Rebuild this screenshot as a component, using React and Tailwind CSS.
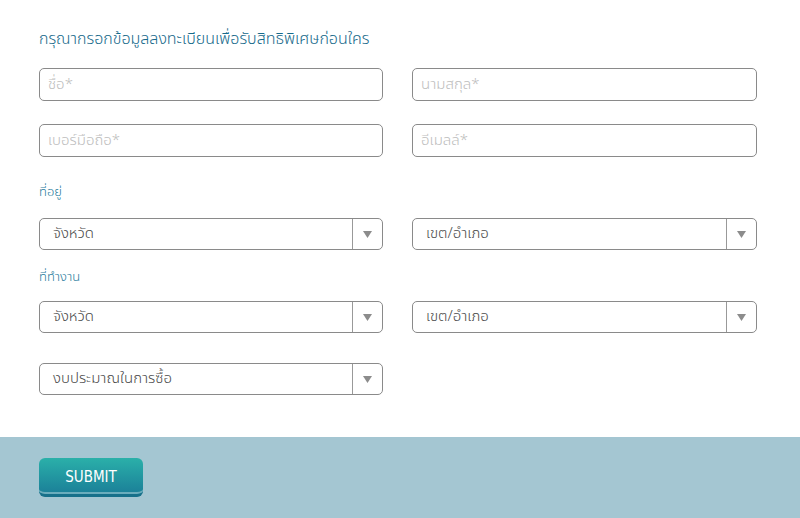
import React from 'react';

const font = { fontFamily: '"Noto Sans Thai", "Noto Sans", "Liberation Sans", sans-serif' };

const TextField = ({ placeholder }) => (
  <input
    type="text"
    placeholder={placeholder}
    className="block h-[33px] w-full rounded-[5px] border border-[#8a8a8a] bg-white px-[8px] text-[15px] font-light text-[#555] outline-none placeholder:text-[#bdbdbd]"
  />
);

const SelectField = ({ label }) => (
  <div className="flex h-[32px] w-full overflow-hidden rounded-[5px] border border-[#8a8a8a] bg-white">
    <div className="flex flex-1 items-center pl-[13px] text-[15px] font-light text-[#4a4a4a]">{label}</div>
    <div className="flex w-[30px] items-center justify-center border-l border-[#999]">
      <svg width="9" height="7" viewBox="0 0 9 7">
        <path d="M0 0h9L4.5 7z" fill="#8c8c8c" />
      </svg>
    </div>
  </div>
);

const App = () => {
  return (
    <div className="w-[800px] h-[518px] bg-white flex flex-col" style={font}>
      <div className="flex-1 pl-[39px] pr-[43px] pt-[28px]">
        <h2 className="text-[16px] font-[350] leading-[22px] text-[#176a8b]">
          กรุณากรอกข้อมูลลงทะเบียนเพื่อรับสิทธิพิเศษก่อนใคร
        </h2>

        <div className="mt-[18px] grid grid-cols-[344px_345px] gap-x-[29px] gap-y-[23px]">
          <TextField placeholder="ชื่อ*" />
          <TextField placeholder="นามสกุล*" />
          <TextField placeholder="เบอร์มือถือ*" />
          <TextField placeholder="อีเมลล์*" />
        </div>

        <div className="mt-[26px] text-[13px] font-light leading-[18px] text-[#1f7b9c]">ที่อยู่</div>
        <div className="mt-[17px] grid grid-cols-[344px_345px] gap-x-[29px]">
          <SelectField label="จังหวัด" />
          <SelectField label="เขต/อำเภอ" />
        </div>

        <div className="mt-[18px] text-[13px] font-light leading-[18px] text-[#1f7b9c]">ที่ทำงาน</div>
        <div className="mt-[15px] grid grid-cols-[344px_345px] gap-x-[29px]">
          <SelectField label="จังหวัด" />
          <SelectField label="เขต/อำเภอ" />
        </div>

        <div className="mt-[30px] grid grid-cols-[344px_345px] gap-x-[29px]">
          <SelectField label="งบประมาณในการซื้อ" />
        </div>
      </div>

      <div className="h-[81px] bg-[#a4c6d2] pl-[39px] pt-[21px]">
        <button
          type="button"
          className="h-[39px] w-[104px] rounded-[6px] border-b-[3px] border-[#17708a] bg-gradient-to-b from-[#2bb0a9] to-[#1b7f98] pt-[3px] text-[15px] text-white shadow-[inset_0_-2px_0_rgba(255,255,255,0.35)]"
          style={{ fontFamily: '"Liberation Sans Narrow", "DejaVu Sans Condensed", sans-serif' }}
        >
          SUBMIT
        </button>
      </div>
    </div>
  );
};

export default App;
